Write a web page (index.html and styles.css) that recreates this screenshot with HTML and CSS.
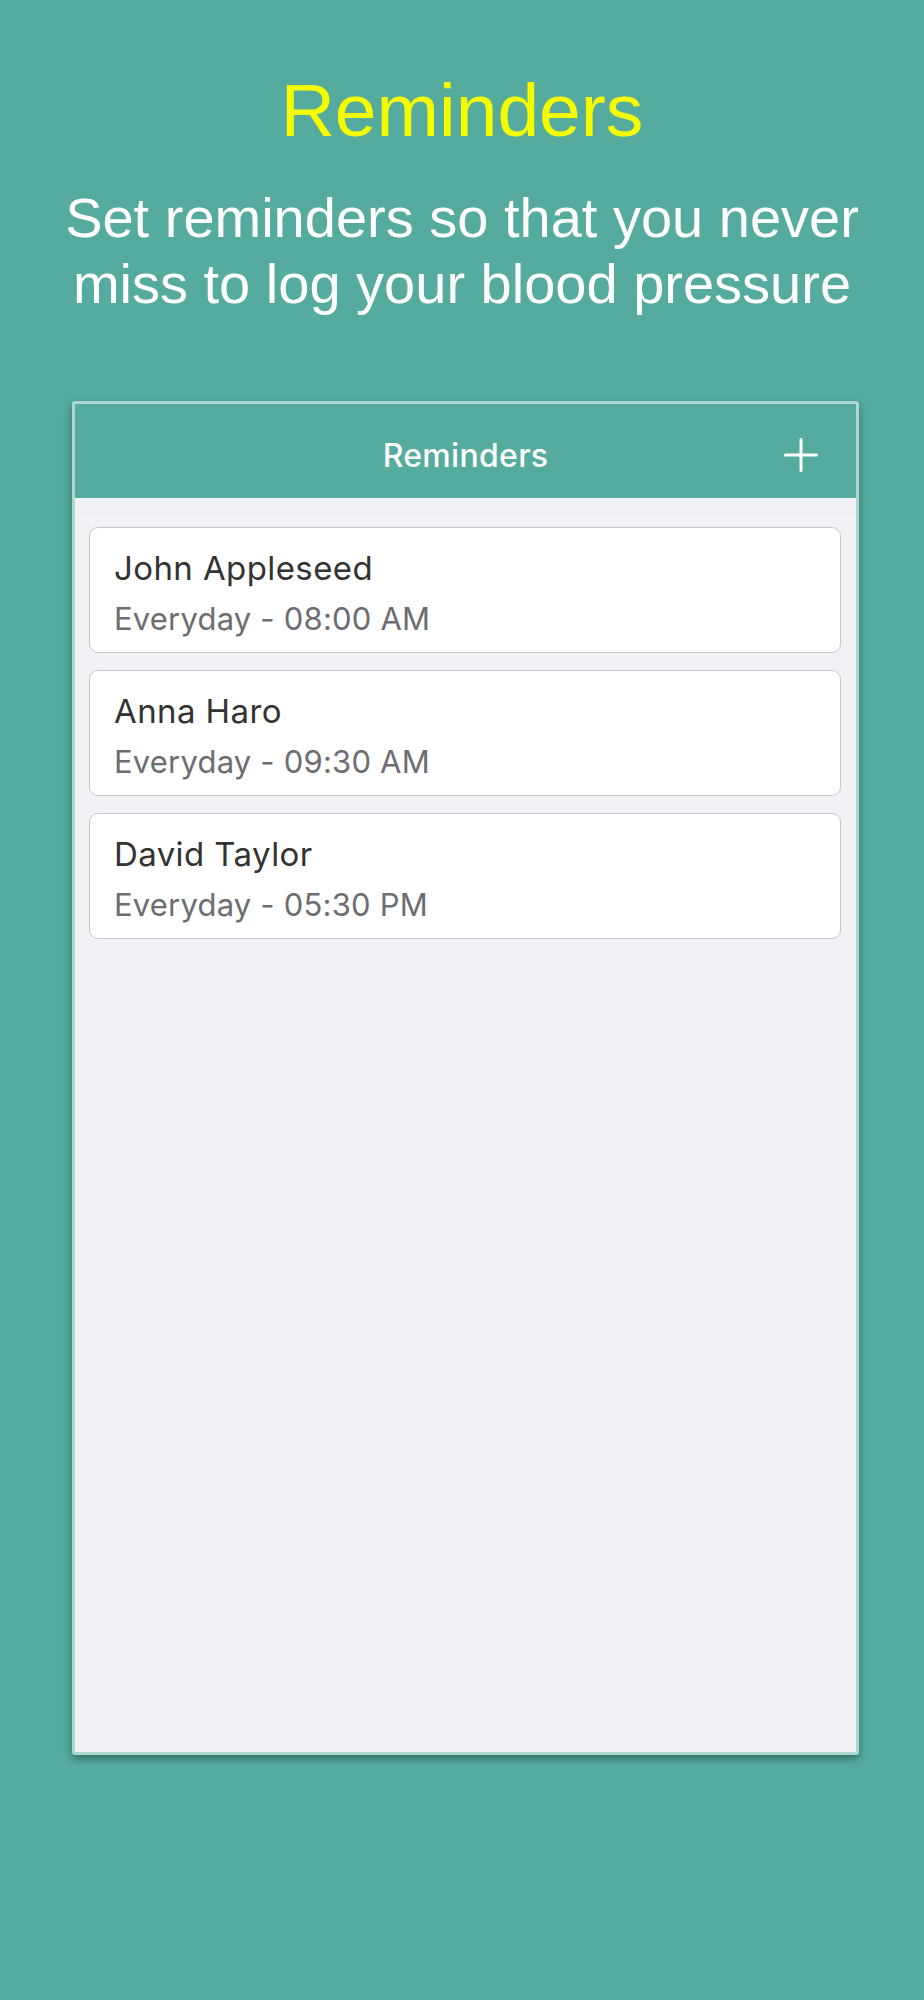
FILE: index.html
```html
<!DOCTYPE html>
<html lang="en">
<head>
<meta charset="utf-8">
<title>Reminders</title>
<link rel="stylesheet" href="styles.css">
</head>
<body>
<main class="page">
  <h1 class="hero-title">Reminders</h1>
  <p class="hero-sub">Set reminders so that you never<br>miss to log your blood pressure</p>
  <section class="device">
    <header class="nav">
      <span class="nav-spacer"></span>
      <span class="nav-title">Reminders</span>
      <button class="nav-add" aria-label="Add">
        <svg width="34" height="34" viewBox="0 0 34 34"><path d="M17 1.5V32.5M1.5 17H32.5" stroke="#fff" stroke-width="3" stroke-linecap="round" fill="none"/></svg>
      </button>
    </header>
    <div class="list">
      <div class="card">
        <div class="card-name">John Appleseed</div>
        <div class="card-time">Everyday - 08:00 AM</div>
      </div>
      <div class="card">
        <div class="card-name">Anna Haro</div>
        <div class="card-time">Everyday - 09:30 AM</div>
      </div>
      <div class="card">
        <div class="card-name">David Taylor</div>
        <div class="card-time">Everyday - 05:30 PM</div>
      </div>
    </div>
  </section>
</main>
</body>
</html>
```

FILE: styles.css
```css
* { box-sizing: border-box; }
html, body { margin: 0; padding: 0; }
body {
  background: #54ab9e;
  width: 924px;
  height: 2000px;
  font-family: "Liberation Sans", Arial, sans-serif;
}
.page {
  display: flex;
  flex-direction: column;
  align-items: center;
  padding-top: 73px;
}
.hero-title {
  margin: 0;
  font-family: "Liberation Sans", Arial, sans-serif;
  font-weight: 400;
  font-size: 75px;
  line-height: 75px;
  color: #f5fc00;
  text-align: center;
}
.hero-sub {
  margin: 37px 0 0;
  font-size: 56px;
  line-height: 66px;
  color: #ffffff;
  text-align: center;
}
.device {
  margin-top: 84px;
  align-self: flex-start;
  margin-left: 72px;
  width: 787px;
  height: 1354px;
  border: 3px solid #acd8d0;
  border-radius: 3px;
  background: #f2f1f6;
  box-shadow: 0 4px 9px rgba(0, 0, 0, 0.35);
  display: flex;
  flex-direction: column;
  font-family: Inter, "Liberation Sans", sans-serif;
}
.nav {
  height: 94px;
  background: #54ab9e;
  display: grid;
  grid-template-columns: 1fr auto 1fr;
  align-items: center;
  padding: 8px 38px 0 0;
}
.nav-title {
  color: #ffffff;
  font-size: 32px;
  font-weight: 500;
  letter-spacing: 0.3px;
  padding-left: 38px;
}
.nav-add {
  justify-self: end;
  background: none;
  border: 0;
  padding: 0;
  width: 34px;
  height: 34px;
  display: block;
}
.nav-add svg { display: block; }
.list {
  padding: 29px 15px 8px 14px;
  display: flex;
  flex-direction: column;
  gap: 17px;
  position: relative;
  border-bottom: 1px solid #f8f8fb;
}
.list::before {
  content: "";
  position: absolute;
  left: 0;
  right: 0;
  top: 21px;
  height: 1px;
  background: #f8f8fb;
}
.card {
  background: #ffffff;
  border: 1px solid #c6c6cb;
  border-radius: 9px;
  height: 126px;
  padding: 21px 24px 0;
}
.card-name {
  font-size: 33px;
  line-height: 38px;
  letter-spacing: 0.4px;
  color: #333333;
}
.card-time {
  margin-top: 14px;
  font-size: 31px;
  line-height: 36px;
  letter-spacing: 0.2px;
  color: #6d6d71;
}
```
